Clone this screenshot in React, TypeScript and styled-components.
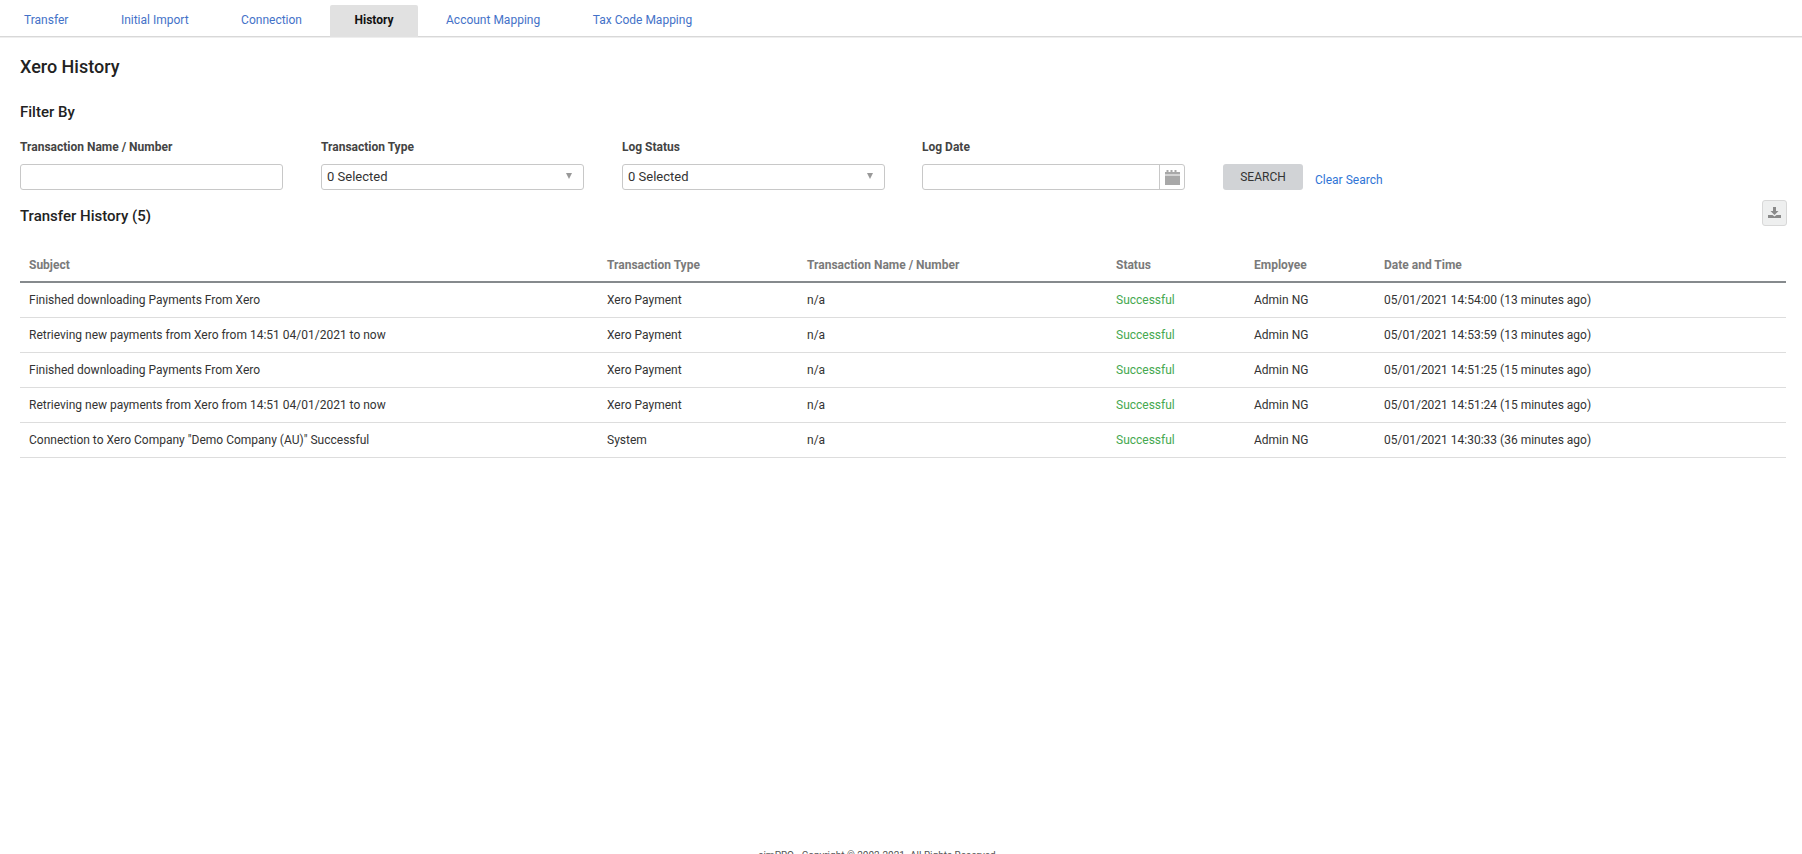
import React from "react";
import styled, { createGlobalStyle } from "styled-components";

const tabs = ["Transfer", "Initial Import", "Connection", "History", "Account Mapping", "Tax Code Mapping"];

const rows = [
  { subject: "Finished downloading Payments From Xero", type: "Xero Payment", date: "05/01/2021 14:54:00 (13 minutes ago)" },
  { subject: "Retrieving new payments from Xero from 14:51 04/01/2021 to now", type: "Xero Payment", date: "05/01/2021 14:53:59 (13 minutes ago)" },
  { subject: "Finished downloading Payments From Xero", type: "Xero Payment", date: "05/01/2021 14:51:25 (15 minutes ago)" },
  { subject: "Retrieving new payments from Xero from 14:51 04/01/2021 to now", type: "Xero Payment", date: "05/01/2021 14:51:24 (15 minutes ago)" },
  { subject: 'Connection to Xero Company "Demo Company (AU)" Successful', type: "System", date: "05/01/2021 14:30:33 (36 minutes ago)" },
];

export default function App() {
  return (
    <Page>
      <GlobalStyle />
      <TabBar>
        {tabs.map((tab) => (
          <Tab key={tab} $active={tab === "History"}>
            {tab}
          </Tab>
        ))}
      </TabBar>
      <Content>
        <Title>Xero History</Title>
        <FilterTitle>Filter By</FilterTitle>
        <FilterRow>
          <Field>
            <Label>Transaction Name / Number</Label>
            <TextInput />
          </Field>
          <Field>
            <Label>Transaction Type</Label>
            <Select>
              0 Selected
              <Caret />
            </Select>
          </Field>
          <Field $gap={37}>
            <Label>Log Status</Label>
            <Select>
              0 Selected
              <Caret />
            </Select>
          </Field>
          <Field>
            <Label>Log Date</Label>
            <DateBox>
              <DateAddon>
                <svg width="15" height="15" viewBox="0 0 15 15" fill="#a8a8a8">
                  <path d="M0 5.500h15V15H0z" />
                  <path d="M0 2h1.500V0h2v2h2V0h2v2h2V0h2v2H15v2.500H0z" />
                </svg>
              </DateAddon>
            </DateBox>
          </Field>
          <SearchButton>SEARCH</SearchButton>
          <ClearLink>Clear Search</ClearLink>
        </FilterRow>
        <HistoryHeader>
          <SectionTitle>Transfer History (5)</SectionTitle>
          <DownloadButton>
            <svg width="13" height="11" viewBox="0 0 13 11" fill="#8a8a8a">
              <path d="M5 0h3v4h2.500L6.500 8 2.500 4H5z" />
              <path d="M0 8h4.500l2 1.500 2-1.500H13v3H0z" />
            </svg>
          </DownloadButton>
        </HistoryHeader>
        <Table>
          <colgroup>
            <col style={{ width: 578 }} />
            <col style={{ width: 200 }} />
            <col style={{ width: 309 }} />
            <col style={{ width: 138 }} />
            <col style={{ width: 130 }} />
            <col />
          </colgroup>
          <thead>
            <tr>
              <Th>Subject</Th>
              <Th>Transaction Type</Th>
              <Th>Transaction Name / Number</Th>
              <Th>Status</Th>
              <Th>Employee</Th>
              <Th>Date and Time</Th>
            </tr>
          </thead>
          <tbody>
            {rows.map((row) => (
              <tr key={row.date}>
                <Td>{row.subject}</Td>
                <Td>{row.type}</Td>
                <Td>n/a</Td>
                <StatusCell>Successful</StatusCell>
                <Td>Admin NG</Td>
                <Td>{row.date}</Td>
              </tr>
            ))}
          </tbody>
        </Table>
      </Content>
      <Footer>simPRO - Copyright © 2002-2021. All Rights Reserved</Footer>
    </Page>
  );
}

const GlobalStyle = createGlobalStyle`
  html, body {
    margin: 0;
    padding: 0;
    background: #fff;
    font-family: Roboto, "Liberation Sans", sans-serif;
    font-size: 12px;
    color: #333;
  }
`;

const Page = styled.div`
  height: 854px;
  overflow: hidden;
`;

const TabBar = styled.div`
  display: flex;
  gap: 4.5px;
  height: 37px;
  padding-top: 5px;
  box-sizing: border-box;
  border-bottom: 1px solid #d8d8d8;
  box-shadow: 0 1px 0 #eee;
`;

const Tab = styled.div<{ $active?: boolean }>`
  display: flex;
  align-items: center;
  justify-content: center;
  box-sizing: border-box;
  height: 32px;
  padding: 0 24px 2px;
  font-size: 12px;
  border-radius: 2px 2px 0 0;
  color: ${(p) => (p.$active ? "#111" : "#4472c8")};
  background: ${(p) => (p.$active ? "#e1e1e1" : "transparent")};
  font-weight: ${(p) => (p.$active ? 700 : 400)};
`;

const Content = styled.div`
  height: 812px;
  padding: 0 15px 0 20px;
  box-sizing: border-box;
`;

const Title = styled.h1`
  margin: 0;
  padding-top: 19px;
  font-size: 18px;
  line-height: 21px;
  font-weight: 500;
  color: #222;
`;

const FilterTitle = styled.h2`
  margin: 25px 0 0;
  font-size: 15px;
  line-height: 20px;
  font-weight: 500;
  color: #222;
`;

const FilterRow = styled.div`
  display: flex;
  align-items: flex-end;
  margin-top: 18px;
`;

const Field = styled.div<{ $gap?: number }>`
  display: flex;
  flex-direction: column;
  width: 263px;
  margin-right: ${(p) => p.$gap ?? 38}px;
`;

const Label = styled.label`
  font-size: 12px;
  line-height: 14px;
  font-weight: 700;
  color: #444;
  margin-bottom: 10px;
`;

const TextInput = styled.input`
  box-sizing: border-box;
  width: 100%;
  height: 26px;
  border: 1px solid #c8c8c8;
  border-radius: 3px;
  outline: none;
`;

const Select = styled.div`
  display: flex;
  align-items: center;
  justify-content: space-between;
  box-sizing: border-box;
  height: 26px;
  padding: 0 11px 2px 5px;
  font-size: 13px;
  color: #333;
  border: 1px solid #c8c8c8;
  border-radius: 3px;
`;

const Caret = styled.span`
  width: 0;
  height: 0;
  border-left: 3.5px solid transparent;
  border-right: 3.5px solid transparent;
  border-top: 6px solid #999;
`;

const DateBox = styled.div`
  display: flex;
  justify-content: flex-end;
  box-sizing: border-box;
  height: 26px;
  border: 1px solid #c8c8c8;
  border-radius: 3px;
`;

const DateAddon = styled.div`
  display: flex;
  align-items: center;
  justify-content: center;
  width: 24px;
  border-left: 1px solid #c8c8c8;
`;

const SearchButton = styled.button`
  width: 80px;
  height: 26px;
  border: none;
  border-radius: 3px;
  background: #d1d3d6;
  color: #333;
  font-family: inherit;
  font-size: 12px;
  padding: 0;
`;

const ClearLink = styled.a`
  margin-left: 12px;
  margin-bottom: 3px;
  font-size: 12px;
  line-height: 14px;
  color: #2f75d6;
`;

const HistoryHeader = styled.div`
  display: flex;
  align-items: flex-start;
  justify-content: space-between;
  margin-top: 10px;
  height: 48px;
`;

const SectionTitle = styled.h2`
  margin: 6px 0 0;
  font-size: 15px;
  line-height: 20px;
  font-weight: 500;
  color: #222;
`;

const DownloadButton = styled.div`
  display: flex;
  align-items: center;
  justify-content: center;
  box-sizing: border-box;
  width: 25px;
  height: 26px;
  padding-bottom: 2px;
  background: #eeefef;
  border: 1px solid #d8d8d8;
  border-radius: 3px;
`;

const Table = styled.table`
  width: calc(100% - 1px);
  table-layout: fixed;
  border-collapse: collapse;
`;

const Th = styled.th`
  height: 34px;
  padding: 0 8px 0 9px;
  box-sizing: border-box;
  text-align: left;
  font-size: 12px;
  font-weight: 700;
  color: #7a7a7a;
  border-bottom: 2px solid #868a8d;
`;

const Td = styled.td`
  height: 34px;
  padding: 0 8px 0 9px;
  font-size: 12px;
  color: #333;
  border-bottom: 1px solid #ddd;
  white-space: nowrap;
`;

const StatusCell = styled(Td)`
  color: #46a84f;
`;

const Footer = styled.div`
  padding-right: 48px;
  text-align: center;
  font-size: 10px;
  line-height: 14px;
  color: #555;
`;
